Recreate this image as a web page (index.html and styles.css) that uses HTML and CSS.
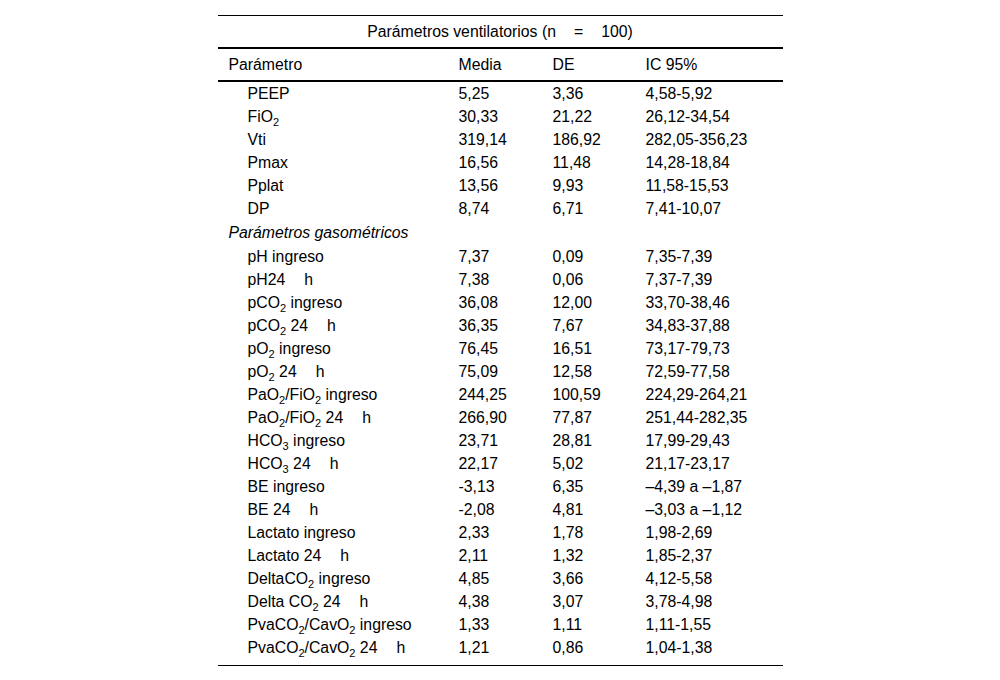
FILE: index.html
```html
<!DOCTYPE html>
<html lang="es">
<head>
<meta charset="utf-8">
<link rel="stylesheet" href="styles.css">
</head>
<body>
<div class="wrap">
<table class="tbl">
<colgroup><col class="c1"><col class="c2"><col class="c3"><col class="c4"></colgroup>
<thead>
<tr class="title"><th colspan="4">Parámetros ventilatorios (n<span class="gap"></span>=<span class="gap"></span>100)</th></tr>
<tr class="head"><th>Parámetro</th><th>Media</th><th>DE</th><th>IC 95%</th></tr>
</thead>
<tbody>
<tr class="first"><td class="ind">PEEP</td><td>5,25</td><td>3,36</td><td>4,58-5,92</td></tr>
<tr><td class="ind">FiO<sub>2</sub></td><td>30,33</td><td>21,22</td><td>26,12-34,54</td></tr>
<tr><td class="ind">Vti</td><td>319,14</td><td>186,92</td><td>282,05-356,23</td></tr>
<tr><td class="ind">Pmax</td><td>16,56</td><td>11,48</td><td>14,28-18,84</td></tr>
<tr><td class="ind">Pplat</td><td>13,56</td><td>9,93</td><td>11,58-15,53</td></tr>
<tr><td class="ind">DP</td><td>8,74</td><td>6,71</td><td>7,41-10,07</td></tr>
<tr class="secrow"><td class="sec" colspan="4">Parámetros gasométricos</td></tr>
<tr><td class="ind">pH ingreso</td><td>7,37</td><td>0,09</td><td>7,35-7,39</td></tr>
<tr><td class="ind">pH24<span class="gap2"></span>h</td><td>7,38</td><td>0,06</td><td>7,37-7,39</td></tr>
<tr><td class="ind">pCO<sub>2</sub> ingreso</td><td>36,08</td><td>12,00</td><td>33,70-38,46</td></tr>
<tr><td class="ind">pCO<sub>2</sub> 24<span class="gap2"></span>h</td><td>36,35</td><td>7,67</td><td>34,83-37,88</td></tr>
<tr><td class="ind">pO<sub>2</sub> ingreso</td><td>76,45</td><td>16,51</td><td>73,17-79,73</td></tr>
<tr><td class="ind">pO<sub>2</sub> 24<span class="gap2"></span>h</td><td>75,09</td><td>12,58</td><td>72,59-77,58</td></tr>
<tr><td class="ind">PaO<sub>2</sub>/FiO<sub>2</sub> ingreso</td><td>244,25</td><td>100,59</td><td>224,29-264,21</td></tr>
<tr><td class="ind">PaO<sub>2</sub>/FiO<sub>2</sub> 24<span class="gap2"></span>h</td><td>266,90</td><td>77,87</td><td>251,44-282,35</td></tr>
<tr><td class="ind">HCO<sub>3</sub> ingreso</td><td>23,71</td><td>28,81</td><td>17,99-29,43</td></tr>
<tr><td class="ind">HCO<sub>3</sub> 24<span class="gap2"></span>h</td><td>22,17</td><td>5,02</td><td>21,17-23,17</td></tr>
<tr><td class="ind">BE ingreso</td><td>-3,13</td><td>6,35</td><td>–4,39 a –1,87</td></tr>
<tr><td class="ind">BE 24<span class="gap2"></span>h</td><td>-2,08</td><td>4,81</td><td>–3,03 a –1,12</td></tr>
<tr><td class="ind">Lactato ingreso</td><td>2,33</td><td>1,78</td><td>1,98-2,69</td></tr>
<tr><td class="ind">Lactato 24<span class="gap2"></span>h</td><td>2,11</td><td>1,32</td><td>1,85-2,37</td></tr>
<tr><td class="ind">DeltaCO<sub>2</sub> ingreso</td><td>4,85</td><td>3,66</td><td>4,12-5,58</td></tr>
<tr><td class="ind">Delta CO<sub>2</sub> 24<span class="gap2"></span>h</td><td>4,38</td><td>3,07</td><td>3,78-4,98</td></tr>
<tr><td class="ind">PvaCO<sub>2</sub>/CavO<sub>2</sub> ingreso</td><td>1,33</td><td>1,11</td><td>1,11-1,55</td></tr>
<tr class="last"><td class="ind">PvaCO<sub>2</sub>/CavO<sub>2</sub> 24<span class="gap2"></span>h</td><td>1,21</td><td>0,86</td><td>1,04-1,38</td></tr>
</tbody>
</table>
</div>
</body>
</html>
```

FILE: styles.css
```css
html, body {
  margin: 0;
  padding: 0;
  background: #ffffff;
}
body {
  font-family: "Liberation Sans", Arial, sans-serif;
  font-size: 15.8px;
  color: #000;
}
.wrap {
  padding-top: 15px;
  display: flex;
  justify-content: center;
}
.tbl {
  width: 565px;
  border-collapse: collapse;
  table-layout: fixed;
  border-top: 1px solid #000;
  border-bottom: 1px solid #000;
}
.c1 { width: 230px; }
.c2 { width: 94px; }
.c3 { width: 93px; }
.c4 { width: 148px; }
th, td {
  font-weight: normal;
  text-align: left;
  padding: 0 0 0 11px;
  white-space: nowrap;
}
.title th {
  text-align: center;
  height: 31px;
  padding: 0;
  border-bottom: 2px solid #000;
}
.head th {
  height: 31px;
  border-bottom: 2px solid #000;
}
tbody td {
  height: 23px;
  line-height: 23px;
}
tbody .secrow td { height: 25px; line-height: 25px; }
tbody .last td { height: 29px; vertical-align: top; }
.ind { padding-left: 30px; }
.sec { font-style: italic; }
sub {
  font-size: 11px;
  line-height: 0;
  vertical-align: -4px;
}
.gap {
  display: inline-block;
  width: 18px;
}
.gap2 {
  display: inline-block;
  width: 19px;
}
```
